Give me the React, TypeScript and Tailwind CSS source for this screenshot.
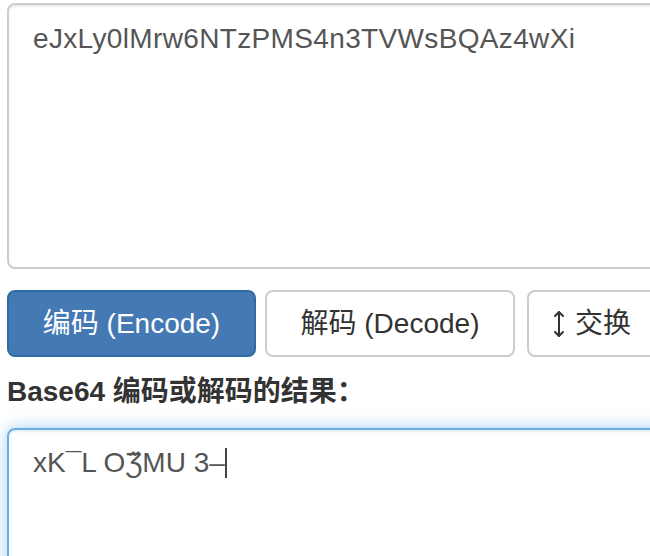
import React from "react";

function ResizeVertical() {
  return (
    <svg width="12" height="28" viewBox="0 0 12 28" fill="none" stroke="#333" strokeWidth="2" strokeLinecap="round" strokeLinejoin="round">
      <line x1="6" y1="2" x2="6" y2="26" />
      <polyline points="2,6 6,2 10,6" />
      <polyline points="2,22 6,26 10,22" />
    </svg>
  );
}

export default function App() {
  return (
    <div
      className="w-[650px] h-[556px] overflow-hidden bg-white pl-[7px] pt-[3px]"
      style={{ fontFamily: '"Liberation Sans", Arial, "Noto Sans CJK SC", sans-serif' }}
    >
      <div className="w-[700px] h-[266px] border-2 border-[#cccccc] rounded-[8px] pl-[24px] pt-[14px] text-[28px] leading-[40px] tracking-[0.35px] text-[#555555] shadow-[inset_0_2px_2px_rgba(0,0,0,0.075)]">
        eJxLy0lMrw6NTzPMS4n3TVWsBQAz4wXi
      </div>

      <div className="mt-[21px] flex h-[67px] w-[700px] text-[28px] leading-[40px]">
        <div className="shrink-0 w-[249px] h-full flex items-center justify-center rounded-[8px] border-2 border-[#2e6da4] bg-[#4479b3] text-white">
          编码 (Encode)
        </div>
        <div className="shrink-0 ml-[9px] w-[250px] h-full flex items-center justify-center rounded-[8px] border-2 border-[#cccccc] bg-white text-[#333333]">
          解码 (Decode)
        </div>
        <div className="shrink-0 ml-[12px] w-[200px] h-full flex items-center pl-[24px] gap-[10px] rounded-[8px] border-2 border-[#cccccc] bg-white text-[#333333]">
          <ResizeVertical />
          <span>交换</span>
        </div>
      </div>

      <div className="mt-[15px] h-[40px] text-[28px] leading-[40px] font-bold text-[#333333]">
        Base64 编码或解码的结果：
      </div>

      <div className="mt-[16px] w-[700px] h-[200px] border-2 border-[#66afe9] rounded-[8px] pl-[24px] pt-[13px] text-[28px] leading-[40px] text-[#555555] shadow-[inset_0_2px_2px_rgba(0,0,0,0.075),0_0_16px_rgba(102,175,233,0.6)]">
        <span>xK¯L OƷ̋MU 3–</span>
        <span className="inline-block w-[2px] h-[30px] bg-[#444444] align-[-6px]"></span>
      </div>
    </div>
  );
}
